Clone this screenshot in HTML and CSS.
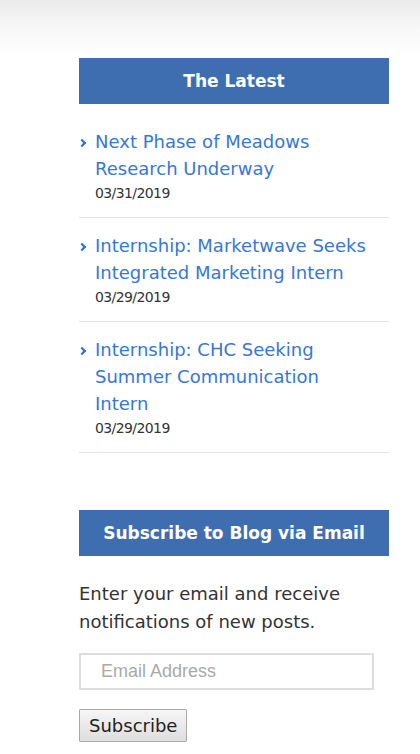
FILE: index.html
```html
<!DOCTYPE html>
<html lang="en">
<head>
    <meta charset="UTF-8">
    <meta name="viewport" content="width=device-width, initial-scale=1.0">
    <title>Sidebar</title>
    <link rel="stylesheet" href="styles.css">
</head>
<body>
    <div class="top-shade"></div>
    <aside class="sidebar">
        <section class="widget">
            <h2 class="widget-title">The Latest</h2>
            <ul class="latest">
                <li>
                    <a href="#">Next Phase of Meadows Research Underway</a>
                    <span class="post-date">03/31/2019</span>
                </li>
                <li>
                    <a href="#">Internship: Marketwave Seeks Integrated Marketing Intern</a>
                    <span class="post-date">03/29/2019</span>
                </li>
                <li>
                    <a href="#">Internship: CHC Seeking Summer Communication Intern</a>
                    <span class="post-date">03/29/2019</span>
                </li>
            </ul>
        </section>

        <section class="widget">
            <h2 class="widget-title">Subscribe to Blog via Email</h2>
            <p class="subscribe-text">Enter your email and receive notifications of new posts.</p>
            <form class="subscribe-form" onsubmit="return false">
                <input type="email" class="email-input" placeholder="Email Address">
                <button type="submit" class="subscribe-button">Subscribe</button>
            </form>
        </section>
    </aside>
</body>
</html>
```

FILE: styles.css
```css
body {
    margin: 0;
    padding: 0;
    background-color: #ffffff;
    font-family: "DejaVu Sans", sans-serif;
    color: #333333;
}
.top-shade {
    height: 58px;
    background: linear-gradient(to bottom, #ebebeb 0%, #f8f8f8 50%, #ffffff 100%);
}
.sidebar {
    width: 310px;
    margin-left: 79px;
}
.widget {
    margin-bottom: 57px;
}
.widget-title {
    margin: 0;
    height: 46px;
    line-height: 46px;
    background-color: #3f6eb0;
    color: white;
    text-align: center;
    font-size: 17px;
    font-weight: bold;
}
.latest {
    list-style: none;
    margin: 0;
    padding: 24px 0 0;
}
.latest li {
    position: relative;
    padding: 0 16px 13px 16px;
    margin-bottom: 14px;
    border-bottom: 1px solid #e4e4e4;
}
.latest li::before {
    content: "";
    position: absolute;
    left: 0;
    top: 12px;
    width: 4px;
    height: 4px;
    border-top: 2px solid #2a6fd0;
    border-right: 2px solid #2a6fd0;
    transform: rotate(45deg);
}
.latest a {
    display: block;
    color: #3777d4;
    text-decoration: none;
    font-size: 18px;
    line-height: 27px;
}
.post-date {
    display: block;
    font-size: 14px;
    line-height: 22px;
    letter-spacing: -0.6px;
    color: #333333;
}
.subscribe-text {
    margin: 24px 0 17px;
    font-size: 18px;
    line-height: 28px;
}
.email-input {
    display: block;
    box-sizing: border-box;
    width: 295px;
    height: 37px;
    padding: 0 20px;
    border: 2px solid #dddddd;
    font-family: "Liberation Sans", Arial, sans-serif;
    font-size: 18px;
    color: #333333;
}
.email-input::placeholder {
    color: #aaaaaa;
}
.subscribe-button {
    display: block;
    margin-top: 19px;
    height: 33px;
    padding: 0 9px;
    border: 1px solid #aaaaaa;
    border-radius: 1px;
    background: linear-gradient(to bottom, #f6f6f6, #dedede);
    font-family: "DejaVu Sans", sans-serif;
    font-size: 18px;
    color: #222222;
}
```
